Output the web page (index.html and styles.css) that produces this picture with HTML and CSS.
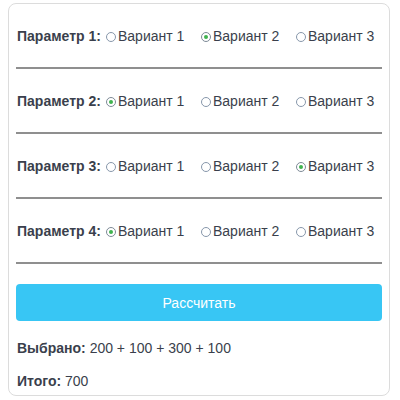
FILE: index.html
```html
<!doctype html>
<html lang="ru">
  <head>
    <meta charset="UTF-8" />
    <title>Калькулятор</title>
    <link rel="stylesheet" href="styles.css">
  </head>
  <body>
    <div class="calc-card">
      <form id="calcForm">
        <div class="param-row">
          <span class="param-label">Параметр 1:</span>
          <label class="option"><input type="radio" name="p1" value="100"><span>Вариант 1</span></label>
          <label class="option"><input type="radio" name="p1" value="200" checked><span>Вариант 2</span></label>
          <label class="option"><input type="radio" name="p1" value="300"><span>Вариант 3</span></label>
        </div>
        <div class="param-row">
          <span class="param-label">Параметр 2:</span>
          <label class="option"><input type="radio" name="p2" value="100" checked><span>Вариант 1</span></label>
          <label class="option"><input type="radio" name="p2" value="200"><span>Вариант 2</span></label>
          <label class="option"><input type="radio" name="p2" value="300"><span>Вариант 3</span></label>
        </div>
        <div class="param-row">
          <span class="param-label">Параметр 3:</span>
          <label class="option"><input type="radio" name="p3" value="100"><span>Вариант 1</span></label>
          <label class="option"><input type="radio" name="p3" value="200"><span>Вариант 2</span></label>
          <label class="option"><input type="radio" name="p3" value="300" checked><span>Вариант 3</span></label>
        </div>
        <div class="param-row">
          <span class="param-label">Параметр 4:</span>
          <label class="option"><input type="radio" name="p4" value="100" checked><span>Вариант 1</span></label>
          <label class="option"><input type="radio" name="p4" value="200"><span>Вариант 2</span></label>
          <label class="option"><input type="radio" name="p4" value="300"><span>Вариант 3</span></label>
        </div>
        <button type="submit" class="calc-btn">Рассчитать</button>
      </form>
      <p class="result"><b>Выбрано:</b> <span id="picked">200 + 100 + 300 + 100</span></p>
      <p class="result"><b>Итого:</b> <span id="total">700</span></p>
    </div>

    <script>
      document.getElementById("calcForm").addEventListener("submit", function (e) {
        e.preventDefault();
        const values = [];
        ["p1", "p2", "p3", "p4"].forEach(function (name) {
          const checked = document.querySelector('input[name="' + name + '"]:checked');
          values.push(checked ? parseInt(checked.value) : 0);
        });
        document.getElementById("picked").textContent = values.join(" + ");
        document.getElementById("total").textContent = values.reduce((a, b) => a + b, 0);
      });
    </script>
  </body>
</html>
```

FILE: styles.css
```css
body {
  margin: 3px 10px 0 8px;
  font-family: "Liberation Sans", Arial, sans-serif;
  font-size: 14px;
  color: #3a3f4c;
  background: #fff;
}
.calc-card {
  border: 1px solid #dcdcdc;
  border-radius: 8px;
  padding: 0 7px 5px;
}
.param-row {
  display: flex;
  align-items: center;
  padding: 24px 0 22px 1px;
  line-height: 17px;
  border-bottom: 2px solid #8f8f8f;
}
.param-label {
  flex: none;
  font-weight: bold;
  width: 89px;
}
.option {
  flex: none;
  display: flex;
  align-items: center;
  width: 95px;
  cursor: pointer;
}
.option input {
  appearance: none;
  -webkit-appearance: none;
  width: 10px;
  height: 10px;
  margin: 0 2px 0 0;
  border: 1px solid #8797ab;
  border-radius: 50%;
  background: #fff;
  display: grid;
  place-items: center;
}
.option input:checked {
  border-color: #7d8a96;
}
.option input:checked::after {
  content: "";
  width: 4px;
  height: 4px;
  border-radius: 50%;
  background: #3fb34f;
}
.calc-btn {
  display: block;
  width: 100%;
  margin-top: 20px;
  height: 37px;
  border: none;
  border-radius: 4px;
  background: #38c6f4;
  color: #fff;
  font-family: inherit;
  font-size: 14px;
  cursor: pointer;
}
.result {
  margin: 19px 0 0 1px;
  line-height: 17px;
}
.result + .result {
  margin-top: 16px;
}
```
